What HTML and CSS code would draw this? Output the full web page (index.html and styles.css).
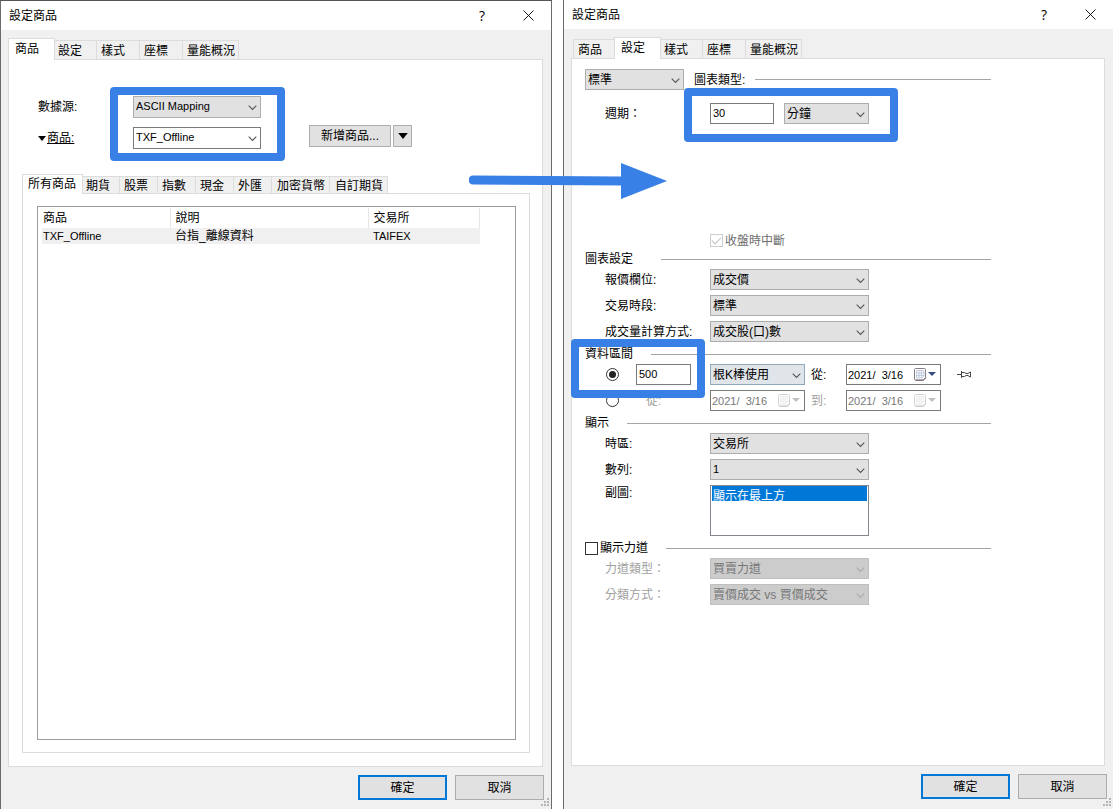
FILE: index.html
```html
<!DOCTYPE html>
<html lang="zh-Hant">
<head>
<meta charset="utf-8">
<title>設定商品</title>
<link rel="stylesheet" href="styles.css">
</head>
<body>
<svg class="defs" aria-hidden="true">
  <symbol id="chevron" viewBox="0 0 9 6"><path d="M.7.7 4.5 4.5 8.3.7" fill="none" stroke="currentColor" stroke-width="1.1"/></symbol>
  <symbol id="close" viewBox="0 0 11 11"><path d="M.5.5l10 10M10.500.5l-10 10" fill="none" stroke="currentColor" stroke-width=".9"/></symbol>
  <symbol id="triangle" viewBox="0 0 8 5"><path d="M0 0h8L4 5z" fill="currentColor"/></symbol>
  <symbol id="grip" viewBox="0 0 9 9"><path d="M6 0h2v2H6zM3 3h2v2H3zM6 3h2v2H6zM0 6h2v2H0zM3 6h2v2H3zM6 6h2v2H6z" fill="#b4b4b4"/></symbol>
  <symbol id="calendar" viewBox="0 0 22 13">
    <path d="M1.500.5h9q1 0 1 1v8l-2.500 2.500h-7.500q-1 0-1-1v-9.500q0-1 1-1z" fill="#fff" stroke="#85808a"/>
    <path d="M12 9.500L9.500 12.300H1.500" fill="none" stroke="#6f6468"/>
    <path d="M2.500 2.500h7.500v5.500l-2 2h-5.500zM2.500 5h7.500M2.500 7.500h7.500M5 2.500v7.500M7.500 2.500v7.500" fill="#f6f9fd" stroke="#bcc7d8" stroke-width=".8"/>
    <path d="M14 4h8l-4 4z" fill="#344b80"/>
  </symbol>
  <symbol id="pin" viewBox="0 0 14 9"><path d="M0 4.500h4M4.500 1v7M4.500 2.500h3l1.500 1h2l2-1.500h.5v5H13l-2-1.500H9l-1.500 1h-3" fill="none" stroke="#444"/></symbol>
</svg>

<main class="stage">
  <section class="dialog dialog--framed">
    <header class="titlebar">
      <h1 class="titlebar__text">設定商品</h1>
      <button class="titlebar__btn" type="button" aria-label="說明">?</button>
      <button class="titlebar__btn" type="button" aria-label="關閉"><svg class="icon-close"><use href="#close"/></svg></button>
    </header>
    <nav class="tabs" role="tablist">
      <button class="tab tab--active" role="tab" aria-selected="true">商品</button>
      <button class="tab" role="tab">設定</button>
      <button class="tab" role="tab">樣式</button>
      <button class="tab" role="tab">座標</button>
      <button class="tab tab--wide" role="tab">量能概況</button>
    </nav>
    <div class="panel panel--symbols">
      <div class="source">
        <div class="source__fields">
          <label for="feed">數據源:</label>
          <div class="combo"><select id="feed" class="latin"><option>ASCII Mapping</option></select><svg class="combo__arrow"><use href="#chevron"/></svg></div>
          <label for="symbol" class="source__symbol"><svg class="icon-triangle"><use href="#triangle"/></svg><span class="underlined">商品:</span></label>
          <div class="combo combo--edit"><select id="symbol" class="latin"><option>TXF_Offline</option></select><svg class="combo__arrow"><use href="#chevron"/></svg></div>
        </div>
        <div class="source__actions">
          <button class="btn btn--add" type="button">新增商品...</button>
          <button class="btn btn--more" type="button" aria-label="更多"><svg class="icon-more"><use href="#triangle"/></svg></button>
        </div>
        <div class="callout callout--source"></div>
      </div>

      <nav class="tabs tabs--small" role="tablist">
        <button class="tab tab--active" role="tab" aria-selected="true">所有商品</button>
        <button class="tab" role="tab">期貨</button>
        <button class="tab" role="tab">股票</button>
        <button class="tab" role="tab">指數</button>
        <button class="tab" role="tab">現金</button>
        <button class="tab" role="tab">外匯</button>
        <button class="tab tab--wide" role="tab">加密貨幣</button>
        <button class="tab tab--wide" role="tab">自訂期貨</button>
      </nav>
      <div class="panel panel--list">
        <div class="listview">
          <table class="symbols">
            <thead><tr><th class="col-symbol">商品</th><th class="col-desc">說明</th><th class="col-exchange">交易所</th></tr></thead>
            <tbody><tr><td class="latin">TXF_Offline</td><td>台指_離線資料</td><td class="latin">TAIFEX</td></tr></tbody>
          </table>
        </div>
      </div>
    </div>
    <footer class="actions">
      <button class="btn btn--dialog btn--default" type="button">確定</button>
      <button class="btn btn--dialog" type="button">取消</button>
    </footer>
    <svg class="grip"><use href="#grip"/></svg>
  </section>

  <section class="dialog dialog--open">
    <header class="titlebar">
      <h1 class="titlebar__text">設定商品</h1>
      <button class="titlebar__btn" type="button" aria-label="說明">?</button>
      <button class="titlebar__btn" type="button" aria-label="關閉"><svg class="icon-close"><use href="#close"/></svg></button>
    </header>
    <nav class="tabs" role="tablist">
      <button class="tab" role="tab">商品</button>
      <button class="tab tab--active" role="tab" aria-selected="true">設定</button>
      <button class="tab" role="tab">樣式</button>
      <button class="tab" role="tab">座標</button>
      <button class="tab tab--wide" role="tab">量能概況</button>
    </nav>
    <form class="panel panel--settings">
      <div class="charttype">
        <div class="combo combo--type"><select id="charttype"><option>標準</option></select><svg class="combo__arrow"><use href="#chevron"/></svg></div>
        <label for="charttype">圖表類型:</label>
        <span class="rule"></span>
      </div>
      <div class="row row--period">
        <label class="row__label" for="period">週期：</label>
        <div class="period">
          <input class="textbox latin" id="period" type="text" value="30">
          <div class="combo"><select aria-label="週期單位"><option>分鐘</option></select><svg class="combo__arrow"><use href="#chevron"/></svg></div>
        </div>
        <div class="callout callout--period"></div>
      </div>
      <label class="check check--disabled session-break"><input type="checkbox" checked disabled>收盤時中斷</label>

      <section class="group">
        <h2 class="group__title group__title--far">圖表設定</h2>
        <div class="row"><label class="row__label" for="quote">報價欄位:</label>
          <div class="combo"><select id="quote"><option>成交價</option></select><svg class="combo__arrow"><use href="#chevron"/></svg></div></div>
        <div class="row"><label class="row__label" for="session">交易時段:</label>
          <div class="combo"><select id="session"><option>標準</option></select><svg class="combo__arrow"><use href="#chevron"/></svg></div></div>
        <div class="row"><label class="row__label" for="volume">成交量計算方式:</label>
          <div class="combo"><select id="volume"><option>成交股(口)數</option></select><svg class="combo__arrow"><use href="#chevron"/></svg></div></div>
      </section>

      <section class="group">
        <h2 class="group__title">資料區間</h2>
        <div class="range">
          <input type="radio" name="range" aria-label="根K棒使用" checked>
          <input class="textbox latin" type="text" value="500" aria-label="根數">
          <div class="combo combo--hot"><select aria-label="單位"><option>根K棒使用</option></select><svg class="combo__arrow"><use href="#chevron"/></svg></div>
          <label for="date-a">從:</label>
          <div class="date"><input class="latin" id="date-a" type="text" value="2021/  3/16"><svg class="date__icon"><use href="#calendar"/></svg></div>
          <svg class="icon-pin"><use href="#pin"/></svg>
        </div>
        <div class="range range--disabled">
          <input type="radio" name="range" id="range-dates">
          <label for="range-dates" class="range__from">從:</label>
          <div class="date"><input class="latin" type="text" value="2021/  3/16" aria-label="從" disabled><svg class="date__icon"><use href="#calendar"/></svg></div>
          <label for="date-b">到:</label>
          <div class="date"><input class="latin" id="date-b" type="text" value="2021/  3/16" disabled><svg class="date__icon"><use href="#calendar"/></svg></div>
        </div>
        <div class="callout callout--range"></div>
      </section>

      <section class="group">
        <h2 class="group__title">顯示</h2>
        <div class="row"><label class="row__label" for="tz">時區:</label>
          <div class="combo"><select id="tz"><option>交易所</option></select><svg class="combo__arrow"><use href="#chevron"/></svg></div></div>
        <div class="row"><label class="row__label" for="series">數列:</label>
          <div class="combo"><select id="series" class="latin"><option>1</option></select><svg class="combo__arrow"><use href="#chevron"/></svg></div></div>
        <div class="row row--top"><label class="row__label" for="subchart">副圖:</label>
          <select class="listbox" id="subchart" size="3"><option selected>顯示在最上方</option></select></div>
      </section>

      <section class="group">
        <h2 class="group__title"><label class="check"><input type="checkbox">顯示力道</label></h2>
        <div class="row row--disabled"><label class="row__label" for="force">力道類型：</label>
          <div class="combo"><select id="force" disabled><option>買賣力道</option></select><svg class="combo__arrow"><use href="#chevron"/></svg></div></div>
        <div class="row row--disabled"><label class="row__label" for="split">分類方式：</label>
          <div class="combo"><select id="split" disabled><option>賣價成交 vs 買價成交</option></select><svg class="combo__arrow"><use href="#chevron"/></svg></div></div>
      </section>
    </form>
    <footer class="actions">
      <button class="btn btn--dialog btn--default" type="button">確定</button>
      <button class="btn btn--dialog" type="button">取消</button>
    </footer>
    <svg class="grip"><use href="#grip"/></svg>
  </section>

  <svg class="flow-arrow" viewBox="0 0 198 36" aria-hidden="true">
    <path d="M4 17 153 18" stroke="#3880e6" stroke-width="9" stroke-linecap="round"/>
    <path d="M152 0l46 18-46 18z" fill="#3880e6"/>
  </svg>
</main>
</body>
</html>
```

FILE: styles.css
```css
* { box-sizing: border-box; }

body {
  margin: 0;
  background: #fff;
  color: #000;
  font: 12px/16px "Liberation Sans", "Noto Sans CJK TC", sans-serif;
}

button, input, select {
  margin: 0;
  color: inherit;
  font: inherit;
}

h1, h2 { margin: 0; font-size: 12px; font-weight: 400; }
svg { display: block; flex: none; }
.defs { display: none; }
.latin { font-size: 11px; }
.underlined { text-decoration: underline; }

.stage {
  position: relative;
  display: grid;
  grid-template-columns: 552fr 550fr;
  column-gap: 11px;
  min-height: 100vh;
}

/* Dialog frame */
.dialog {
  position: relative;
  display: flex;
  flex-direction: column;
  min-width: 0;
  background: #f0f0f0;
  border-left: 1px solid #6b6b6b;
}
.dialog--framed { border-top: 1px solid #555; border-right: 1px solid #6b6b6b; }
.dialog--open { padding-bottom: 1px; }

.titlebar {
  display: flex;
  align-items: center;
  height: 29px;
  padding-left: 8px;
  background: #fff;
}
.titlebar__text { flex: 1; }
.titlebar__btn {
  display: flex;
  align-items: center;
  justify-content: center;
  width: 46px;
  height: 29px;
  padding: 0;
  border: 0;
  background: none;
  font: 14px/16px "Open Sans", sans-serif;
}
.icon-close { width: 11px; height: 11px; }

.actions {
  display: flex;
  justify-content: flex-end;
  gap: 8px;
  padding: 8px 6px 9px;
}
.dialog--framed .actions { padding-right: 7px; }
.grip { position: absolute; right: 1px; bottom: 2px; width: 9px; height: 9px; }

/* Tabs */
.tabs {
  display: flex;
  align-items: flex-end;
  height: 29px;
  padding: 0 9px;
}
.tab {
  height: 19px;
  padding: 1px 14px 0 4px;
  border: 1px solid #dcdcdc;
  border-width: 1px 0 0 1px;
  background: #f0f0f0;
  white-space: nowrap;
}
.tab:last-child { border-right-width: 1px; }
.tab--wide { padding: 1px 3px 0 4px; }
.tab--active {
  position: relative;
  z-index: 1;
  height: 22px;
  margin: 0 -2px -1px;
  padding: 0 15px 1px 6px;
  border-right-width: 1px;
  background: #fff;
}
.tabs--small { height: 19px; padding: 0 15px; }
.tabs--small .tab { height: 17px; padding: 1px 9px 0 4px; }
.tabs--small .tab--wide { padding: 1px 4px 0 5px; }
.tabs--small .tab--active { height: 20px; padding: 0 6px 1px 5px; }

.panel {
  flex: 1;
  display: flex;
  flex-direction: column;
  background: #fff;
  border: 1px solid #dcdcdc;
}
.dialog > .panel { margin: 0 8px 0 7px; }

/* Symbol source */
.source {
  position: relative;
  display: flex;
  align-items: flex-end;
  gap: 48px;
  padding: 36px 0 25px 29px;
}
.source__fields {
  display: grid;
  grid-template-columns: 95px 128px;
  grid-auto-rows: 22px;
  row-gap: 9px;
  align-items: center;
}
.source__fields .combo { height: 22px; }
.source__symbol { display: flex; align-items: center; gap: 1px; }
.icon-triangle { width: 8px; height: 5px; }
.source__actions { display: flex; gap: 2px; padding-bottom: 2px; }

.panel--list { margin: 0 12px 13px 13px; padding: 12px 13px 12px 14px; }
.listview { flex: 1; border: 1px solid #9a9ca4; }

.symbols { margin: 1px 0 0 4px; border-collapse: collapse; table-layout: fixed; width: 438px; }
.symbols th, .symbols td { padding: 0 0 0 5px; font-weight: 400; text-align: left; }
.symbols th { height: 20px; border-right: 1px solid #e5e5e5; }
.symbols td { height: 16px; line-height: 15px; background: #f0f0f0; }
.symbols th:first-child, .symbols td:first-child { padding-left: 1px; }
.col-symbol { width: 128px; }
.col-desc { width: 198px; }

/* Controls */
.btn {
  display: flex;
  align-items: center;
  justify-content: center;
  padding: 0;
  border: 1px solid #adadad;
  background: #e1e1e1;
}
.btn--dialog { width: 89px; height: 25px; }
.btn--default { border: 2px solid #0078d7; }
.btn--add { width: 82px; height: 22px; }
.btn--more { width: 19px; height: 22px; }
.icon-more { width: 10px; height: 6px; }

.combo { position: relative; height: 21px; }
.combo select {
  appearance: none;
  display: block;
  width: 100%;
  height: 100%;
  padding: 0 20px 0 2px;
  border: 1px solid #adadad;
  border-radius: 0;
  background: #e1e1e1;
}
.combo select.latin { padding-bottom: 2px; }
.combo--edit select { background: #fff; border-color: #7a7a7a; }
.combo--hot select { background: #e0e5ea; border-color: #8faabd; }
.combo__arrow {
  position: absolute;
  top: 9px;
  right: 4px;
  width: 9px;
  height: 6px;
  color: #555;
  pointer-events: none;
}
.combo select:disabled { background: #ccc; border-color: #bfbfbf; color: #777; opacity: 1; }
.row--disabled .combo__arrow { color: #aaa; }

.textbox {
  width: 100%;
  height: 21px;
  padding: 0 2px 2px;
  border: 1px solid #7a7a7a;
  background: #fff;
}

.listbox {
  height: 51px;
  padding: 0;
  border: 1px solid #828790;
  border-radius: 0;
  background: #fff;
  overflow: hidden;
}
.listbox option {
  height: 15px;
  min-height: 0;
  margin: 0 1px;
  padding: 0 1px;
  line-height: 14px;
}
.listbox option:checked { background: #0078d7 linear-gradient(#0078d7, #0078d7); color: #fff; }

input[type="radio"], input[type="checkbox"] {
  appearance: none;
  display: grid;
  place-items: center;
  flex: none;
  width: 13px;
  height: 13px;
  border: 1px solid #333;
  background: #fff;
}
input[type="radio"] { border-radius: 50%; }
input[type="radio"]:checked::before {
  width: 7px;
  height: 7px;
  border-radius: 50%;
  background: #222;
  content: "";
}
input[type="checkbox"]:checked::before {
  width: 8px;
  height: 4px;
  margin-bottom: 3px;
  border: solid #c0c0c0;
  border-width: 0 0 1px 1px;
  transform: rotate(-45deg);
  content: "";
}
.check { display: flex; align-items: center; gap: 2px; }
.check--disabled { color: #6d6d6d; }
.check--disabled input { border-color: #ccc; }

/* Settings form */
.panel--settings { padding: 10px 113px 10px 13px; }
.rule { flex: 1; height: 1px; background: #a5a5a5; }

.charttype { display: flex; align-items: center; gap: 10px; }
.combo--type { width: 99px; }

.row {
  display: grid;
  grid-template-columns: 125px 159px;
  align-items: center;
  min-height: 21px;
}
.row__label { padding-left: 20px; white-space: nowrap; }
.row--top { align-items: start; }
.row--disabled { color: #a0a0a0; }
.row--period { position: relative; margin-top: 13px; }
.period { display: grid; grid-template-columns: 64px 85px; column-gap: 10px; }

.session-break { margin: 109px 0 3px 125px; height: 15px; }

.group {
  position: relative;
  display: flex;
  flex-direction: column;
  gap: 5px;
  margin-bottom: 4px;
}
.group__title { display: flex; align-items: center; gap: 18px; height: 16px; margin-bottom: -3px; }
.group__title::after { flex: 1; height: 1px; background: #a5a5a5; content: ""; }
.group__title--far { gap: 28px; }

.range {
  display: grid;
  grid-template-columns: 30px 55px 19px 95px 6px 35px 95px 16px 14px;
  align-items: center;
  min-height: 21px;
  padding-left: 21px;
}
.range > :nth-child(3) { grid-column: 4; }
.range > :nth-child(4) { grid-column: 6; }
.range > :nth-child(5) { grid-column: 7; }
.range > :nth-child(6) { grid-column: 9; }
.range--disabled label { color: #a0a0a0; }
.range__from { padding-left: 10px; }

.date { position: relative; height: 21px; }
.date input {
  display: block;
  width: 100%;
  height: 100%;
  padding: 0 24px 0 1px;
  border: 1px solid #7a7a7a;
  background: #fff;
}
.date input:disabled { color: #777; }
.date__icon { position: absolute; top: 4px; right: 5px; width: 22px; height: 13px; }
.range--disabled .date__icon { opacity: .35; filter: grayscale(1); }
.icon-pin { width: 14px; height: 9px; }

/* Annotations drawn over the dialogs */
.callout {
  position: absolute;
  z-index: 2;
  border: 8px solid #3880e6;
  border-radius: 4px;
  pointer-events: none;
}
.callout--source { top: 27px; left: 101px; width: 175px; height: 74px; }
.callout--period { top: -15px; left: 99px; width: 214px; height: 54px; }
.callout--range { top: -7px; left: -14px; width: 134px; height: 59px; }

.flow-arrow {
  position: absolute;
  z-index: 3;
  top: 163px;
  left: calc(50% - 88px);
  width: 198px;
  height: 36px;
}
```
